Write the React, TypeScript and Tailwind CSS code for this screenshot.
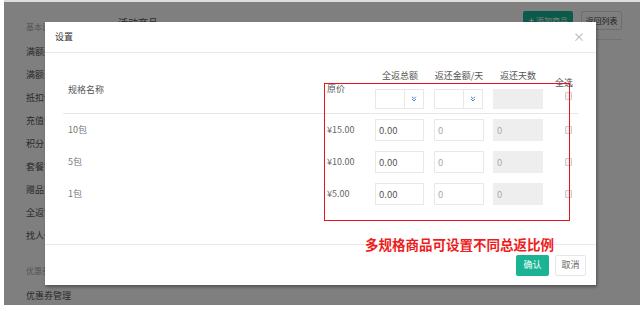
import { ChevronsDown, Plus } from 'lucide-react';

const sideItems = ['满额返现', '满额包邮', '抵扣设置', '充值优惠', '积分兑换', '套餐管理', '赠品管理', '全返管理', '找人代付'];

const rows = [
  { name: '10包', price: '¥15.00' },
  { name: '5包', price: '¥10.00' },
  { name: '1包', price: '¥5.00' },
];

const Checkbox = () => (
  <span className="block w-[7px] h-[8px] rounded-[1px] border border-[#cccccc] bg-[#f3f3f3]" />
);

const SelectBox = () => (
  <div className="w-[49px] h-[20px] border border-[#e8e8e8] flex">
    <div className="w-[29px] border-r border-[#e8e8e8]" />
    <div className="flex-1 flex items-center justify-center">
      <ChevronsDown size={8} strokeWidth={3} color="#4f80d0" />
    </div>
  </div>
);

export default function App() {
  return (
    <div
      className="relative w-[643px] h-[313px] bg-white overflow-hidden"
      style={{ fontFamily: '"Noto Sans CJK SC", "Noto Sans", sans-serif' }}
    >
      {/* page behind the dialog */}
      <div className="absolute left-[4px] top-0 w-[636px] h-[305px] bg-white border-t-2 border-[#dddddd] flex">
        <div className="w-[96px] pl-[22px] pt-[20px] flex flex-col">
          <div className="text-[8px] leading-[10px] text-[#aaaaaa]">基本设置</div>
          <div className="mt-[8px] flex flex-col">
            {sideItems.map((s) => (
              <div key={s} className="text-[9px] leading-[23px] text-[#555] whitespace-nowrap">
                {s}
              </div>
            ))}
          </div>
          <div className="mt-[19px] text-[8px] leading-[10px] text-[#aaaaaa]">优惠券</div>
          <div className="mt-[8px] text-[9px] leading-[23px] text-[#555] whitespace-nowrap">优惠券管理</div>
        </div>
        <div className="flex-1 pl-[18px] pr-[18px]">
          <div className="h-[38px] flex items-center justify-between border-b border-[#e5e5e5]">
            <span className="text-[10px] text-[#555] mt-[4px]">活动商品</span>
            <div className="flex items-center gap-[8px]">
              <span className="h-[19px] w-[50px] rounded-[2px] bg-[#1ab394] text-white text-[8px] flex items-center justify-center gap-[1px]">
                <Plus size={7} strokeWidth={3} />
                添加商品
              </span>
              <span className="h-[19px] w-[41px] rounded-[2px] border border-[#dcdcdc] text-[#444] text-[8px] flex items-center justify-center">
                返回列表
              </span>
            </div>
          </div>
        </div>
        <div className="absolute inset-0 bg-black/50" />
      </div>

      {/* dialog */}
      <div className="absolute left-[45px] top-[22px] w-[551px] h-[263px] bg-white shadow-[1px_2px_3px_rgba(0,0,0,0.35)] flex flex-col">
        <div className="h-[31px] flex items-center justify-between pl-[10px] pr-[11px] border-b border-[#e8e8e8]">
          <span className="text-[9px] text-[#333]">设置</span>
          <span className="text-[12px] leading-none text-[#b5b5b5]">×</span>
        </div>

        <div className="flex-1 px-[18px]">
          <div className="h-[61px] flex border-b border-[#e6e6e6]">
            <div className="w-[259px] pl-[5px] pt-[32px] text-[9px] leading-[10px] text-[#555]">规格名称</div>
            <div className="w-[53px] pl-[5px] pt-[31px] text-[9px] leading-[10px] text-[#555]">原价</div>
            {['全返总额', '返还金额/天', '返还天数'].map((h, i) => (
              <div key={h} className={i === 2 ? 'w-[62px] pt-[18px]' : 'w-[59px] pt-[18px]'}>
                <div className="w-[50px] flex justify-center text-[9px] leading-[10px] text-[#555] whitespace-nowrap">
                  {h}
                </div>
                <div className="mt-[8px]">
                  {i < 2 ? <SelectBox /> : <div className="w-[50px] h-[20px] bg-[#eeeeee]" />}
                </div>
              </div>
            ))}
            <div className="w-[22px] pt-[25px]">
              <div className="text-[9px] leading-[10px] text-[#555] whitespace-nowrap">全选</div>
              <div className="mt-[4px] ml-[10px]">
                <Checkbox />
              </div>
            </div>
          </div>

          {rows.map((r) => (
            <div key={r.name} className="h-[32px] flex items-center">
              <div className="w-[259px] pl-[5px] text-[9px] text-[#777]">{r.name}</div>
              <div className="w-[53px] pl-[5px] text-[9px] text-[#666]">{r.price}</div>
              <div className="w-[59px]">
                <div className="w-[49px] h-[22px] border border-[#e8e8e8] flex items-center pl-[3px] text-[9.5px] text-[#555]">0.00</div>
              </div>
              <div className="w-[59px]">
                <div className="w-[50px] h-[22px] border border-[#e8e8e8] flex items-center pl-[3px] text-[9.5px] text-[#aaa]">0</div>
              </div>
              <div className="w-[62px]">
                <div className="w-[50px] h-[22px] bg-[#eeeeee] flex items-center pl-[4px] text-[9.5px] text-[#aaa]">0</div>
              </div>
              <div className="w-[22px] pl-[10px]">
                <Checkbox />
              </div>
            </div>
          ))}
        </div>

        <div className="h-[41px] border-t border-[#e8e8e8] flex items-center justify-end gap-[6px] pr-[10px]">
          <span className="w-[33px] h-[21px] rounded-[2px] bg-[#1ab394] text-white text-[9px] flex items-center justify-center">确认</span>
          <span className="w-[31px] h-[21px] rounded-[2px] border border-[#e6e6e6] text-[#666] text-[9px] flex items-center justify-center">取消</span>
        </div>
      </div>

      {/* red annotation */}
      <div className="absolute left-[324px] top-[83px] w-[246px] h-[138px] border border-[#e8141c]" />
      <div className="absolute left-[365px] top-[236px] text-[13.5px] leading-[16px] font-bold text-[#ee1c1c] whitespace-nowrap">
        多规格商品可设置不同总返比例
      </div>
    </div>
  );
}
